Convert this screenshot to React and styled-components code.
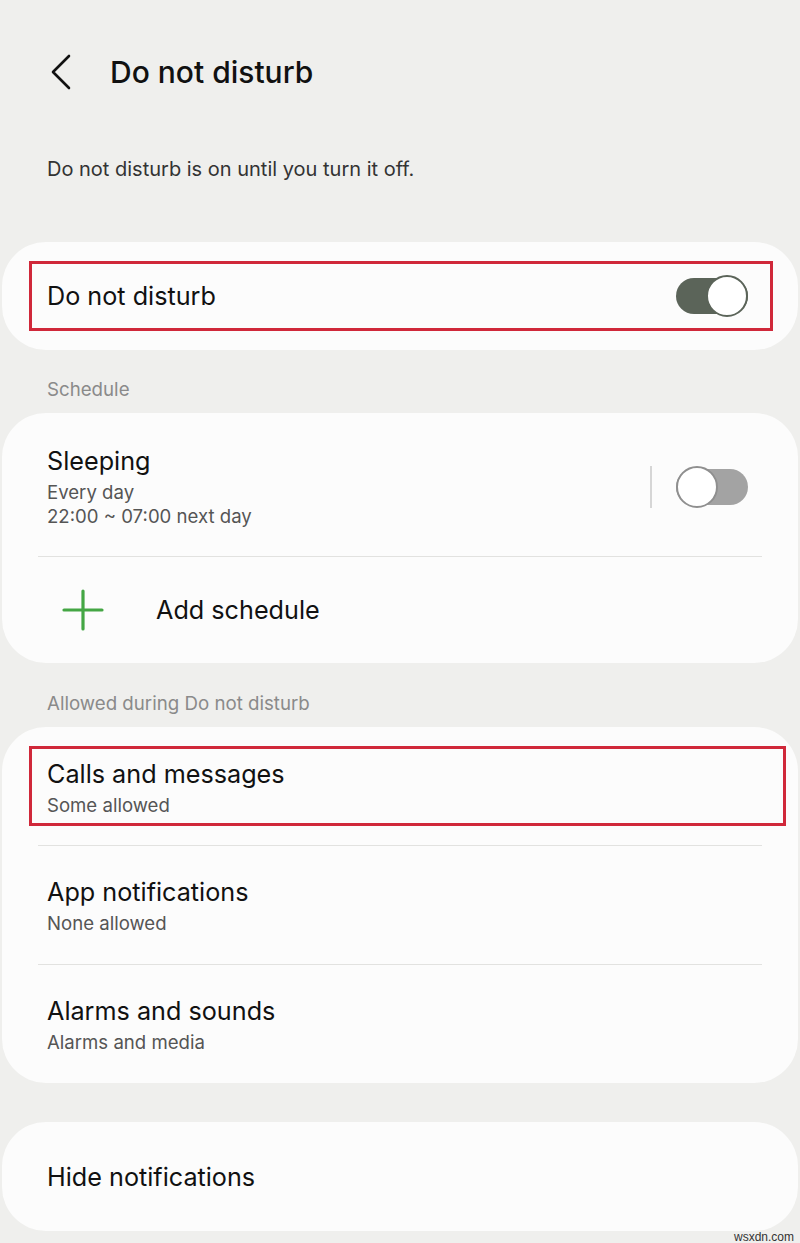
import React from 'react';
import styled, { createGlobalStyle } from 'styled-components';

const GlobalStyle = createGlobalStyle`
    body {
        margin: 0;
        background: #efefed;
        font-family: Inter, Roboto, "Liberation Sans", sans-serif;
        color: #111;
    }
`;

const Page = styled.div`
    width: 800px;
    min-height: 1243px;
    background: #efefed;
    overflow: hidden;
`;

const Header = styled.header`
    height: 144px;
    display: flex;
    align-items: center;
    padding-left: 48px;
    gap: 36px;
`;

const BackButton = styled.button`
    border: none;
    background: none;
    padding: 0;
    width: 26px;
    height: 36px;
    display: flex;
    align-items: center;
    justify-content: center;
`;

const Title = styled.h1`
    margin: 0;
    font-size: 30px;
    font-weight: 500;
    color: #111;
`;

const Description = styled.p`
    margin: 0;
    padding: 13px 47px 0;
    font-size: 20px;
    line-height: 24px;
    color: #333;
`;

const Card = styled.section`
    margin: ${(p) => p.$top || 0}px 2px 0;
    background: #fcfcfc;
    border-radius: 44px;
    overflow: hidden;
`;

const SectionLabel = styled.div`
    margin-top: ${(p) => p.$top}px;
    padding-left: 47px;
    font-size: 18.7px;
    line-height: 22px;
    color: #8a8a8a;
`;

const Marked = styled.div`
    border: 3px solid #d0283a;
    display: flex;
    align-items: center;
    justify-content: space-between;
    height: ${(p) => (p.$height ? `${p.$height}px` : 'auto')};
    padding: ${(p) => p.$pad};
    box-sizing: border-box;
`;

const MarkSlot = styled.div`
    padding: ${(p) => p.$pad};
`;

const Row = styled.div`
    display: flex;
    align-items: center;
    justify-content: space-between;
    padding: ${(p) => p.$pad || '31px 52px 29px 45px'};
    min-height: ${(p) => (p.$height ? `${p.$height}px` : 'auto')};
    box-sizing: border-box;
`;

const Texts = styled.div`
    display: flex;
    flex-direction: column;
`;

const ItemTitle = styled.div`
    font-size: 25.2px;
    line-height: 30px;
    color: #111;
`;

const ItemSub = styled.div`
    font-size: 18.6px;
    line-height: 24px;
    color: #555;
    ${ItemTitle} + & {
        margin-top: 4px;
    }
`;

const Divider = styled.hr`
    margin: 0 36px;
    border: none;
    height: 1px;
    background: #e2e2e0;
`;

const Controls = styled.div`
    display: flex;
    align-items: center;
    gap: 24px;
`;

const VSep = styled.div`
    width: 2px;
    height: 42px;
    background: #d6d6d6;
`;

const Track = styled.div`
    position: relative;
    width: 72px;
    height: 36px;
    border-radius: 18px;
    background: ${(p) => (p.$on ? '#5b6459' : '#a3a3a3')};
`;

const Thumb = styled.div`
    position: absolute;
    top: -3px;
    ${(p) => (p.$on ? 'right: 0;' : 'left: 0;')}
    width: 38px;
    height: 38px;
    border-radius: 50%;
    background: #fff;
    border: 2px solid ${(p) => (p.$on ? '#5b6459' : '#8f8f8f')};
`;

const AddRow = styled.div`
    height: 106px;
    display: flex;
    align-items: center;
    padding-left: 60px;
    gap: 52px;
    font-size: 25.2px;
    color: #111;
`;

const Watermark = styled.div`
    text-align: right;
    padding-right: 6px;
    font-size: 12px;
    line-height: 12px;
    color: #333;
    font-family: "Liberation Sans", Arial, sans-serif;
`;

const Switch = ({ on }) => (
    <Track $on={on}>
        <Thumb $on={on} />
    </Track>
);

export default function App() {
    return (
        <Page>
            <GlobalStyle />
            <Header>
                <BackButton aria-label="Back">
                    <svg width="22" height="36" viewBox="0 0 22 36">
                        <path d="M19 2 L3 18 L19 34" fill="none" stroke="#111" strokeWidth="2.6" strokeLinecap="round" strokeLinejoin="round" />
                    </svg>
                </BackButton>
                <Title>Do not disturb</Title>
            </Header>
            <Description>Do not disturb is on until you turn it off.</Description>

            <Card $top={61}>
                <MarkSlot $pad="19px 25px 19px 27px">
                    <Marked $height={70} $pad="0 22px 0 15px">
                        <ItemTitle>Do not disturb</ItemTitle>
                        <Switch on />
                    </Marked>
                </MarkSlot>
            </Card>

            <SectionLabel $top={29}>Schedule</SectionLabel>
            <Card $top={12}>
                <Row $pad="33px 50px 28px 45px">
                    <Texts>
                        <ItemTitle>Sleeping</ItemTitle>
                        <ItemSub>Every day</ItemSub>
                        <ItemSub>22:00 ~ 07:00 next day</ItemSub>
                    </Texts>
                    <Controls>
                        <VSep />
                        <Switch />
                    </Controls>
                </Row>
                <Divider />
                <AddRow>
                    <svg width="42" height="42" viewBox="0 0 42 42">
                        <path d="M21 2 V40 M2 21 H40" stroke="#44a644" strokeWidth="3.2" strokeLinecap="round" />
                    </svg>
                    Add schedule
                </AddRow>
            </Card>

            <SectionLabel $top={30}>Allowed during Do not disturb</SectionLabel>
            <Card $top={12}>
                <MarkSlot $pad="19px 12px 19px 27px">
                    <Marked $pad="10px 15px 6px">
                        <Texts>
                            <ItemTitle>Calls and messages</ItemTitle>
                            <ItemSub>Some allowed</ItemSub>
                        </Texts>
                    </Marked>
                </MarkSlot>
                <Divider />
                <Row>
                    <Texts>
                        <ItemTitle>App notifications</ItemTitle>
                        <ItemSub>None allowed</ItemSub>
                    </Texts>
                </Row>
                <Divider />
                <Row>
                    <Texts>
                        <ItemTitle>Alarms and sounds</ItemTitle>
                        <ItemSub>Alarms and media</ItemSub>
                    </Texts>
                </Row>
            </Card>

            <Card $top={39}>
                <Row $height={109} $pad="0 52px 0 45px">
                    <ItemTitle>Hide notifications</ItemTitle>
                </Row>
            </Card>
            <Watermark>wsxdn.com</Watermark>
        </Page>
    );
}
